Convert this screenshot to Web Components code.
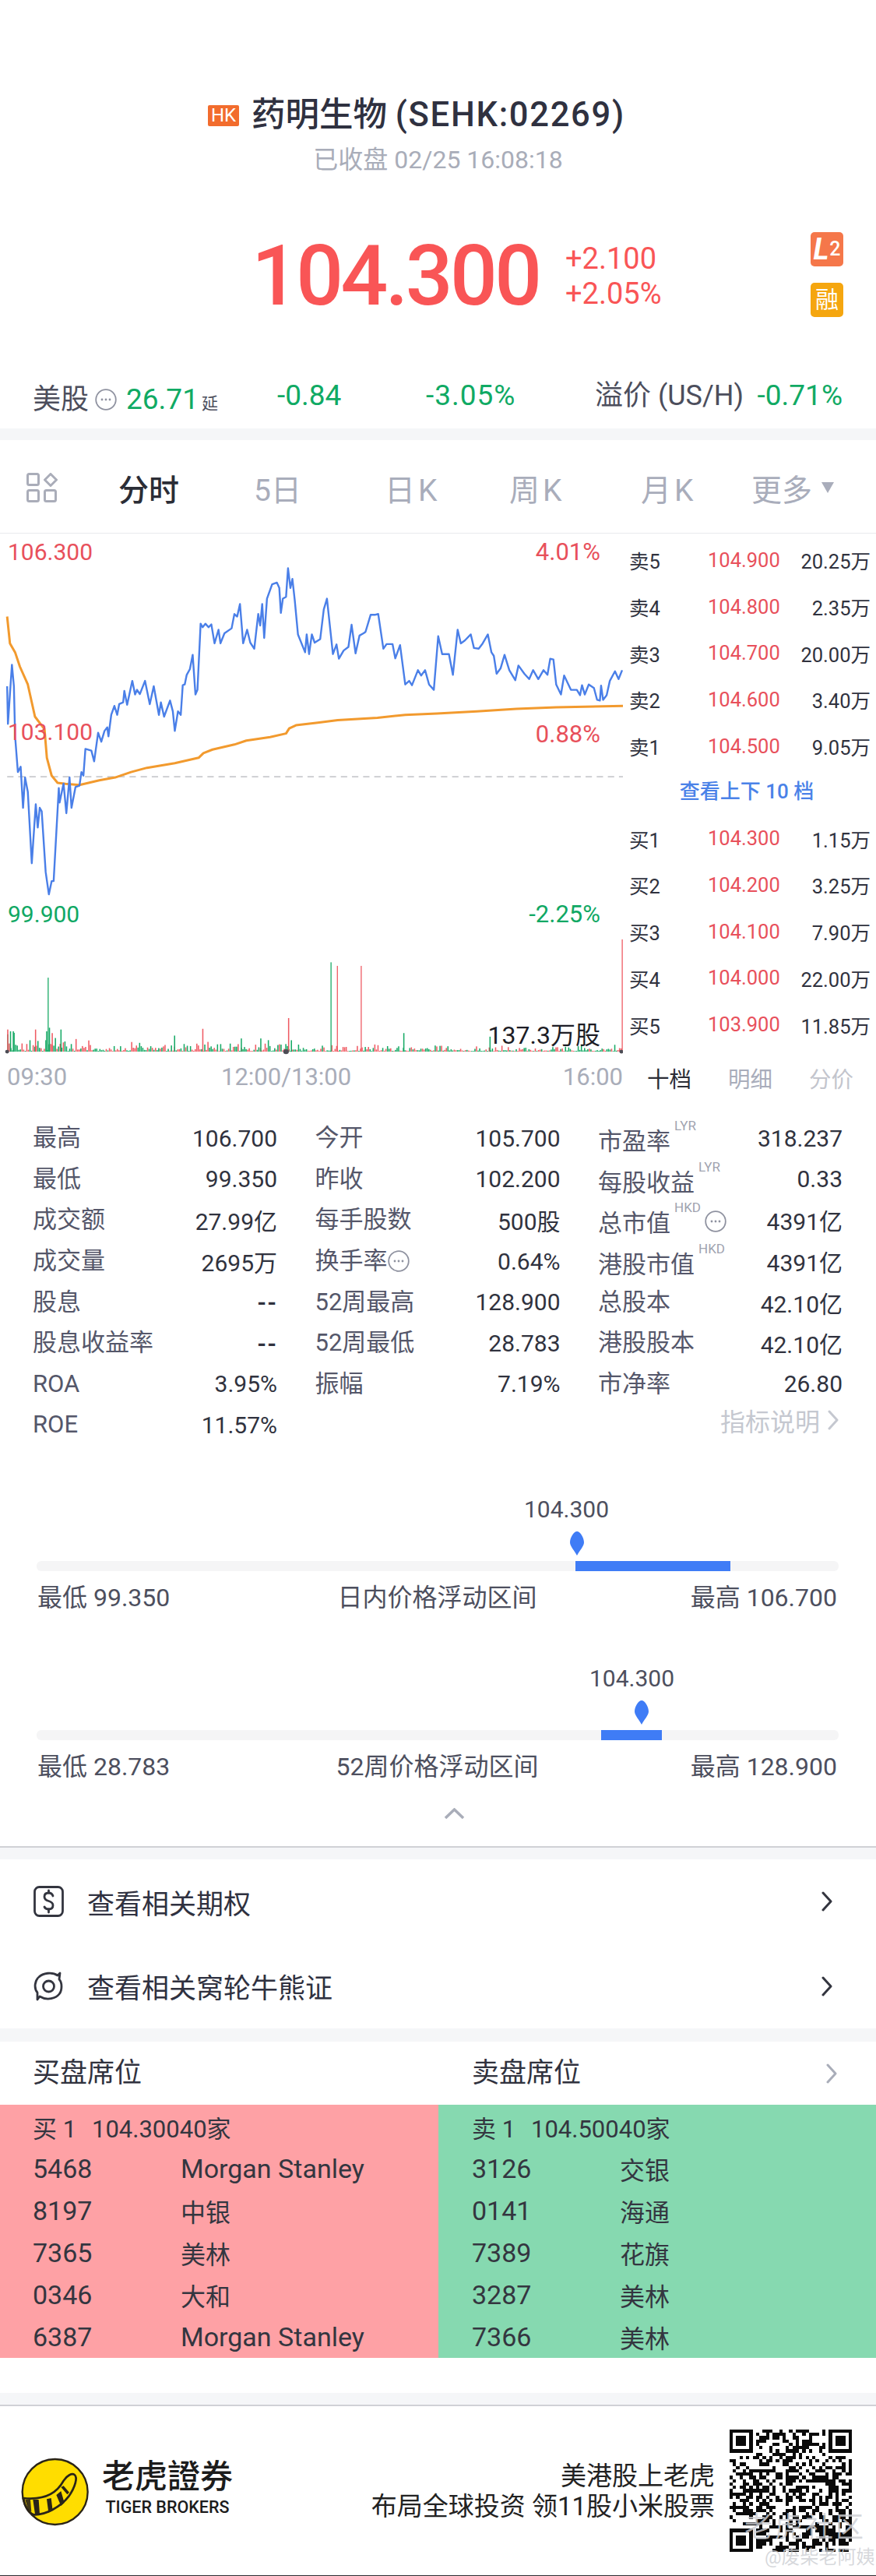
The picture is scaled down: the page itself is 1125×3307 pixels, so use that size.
<!DOCTYPE html>
<html lang="zh">
<head>
<meta charset="utf-8">
<title>药明生物</title>
<style>
  html, body { margin: 0; padding: 0; background: #fff; }
  body { width: 1125px; height: 3307px; overflow: hidden; color: #30323e;
    font-family: Roboto, "Noto Sans CJK SC", sans-serif; }
</style>
</head>
<body>
<quote-header></quote-header>
<us-quote></us-quote>
<section-gap style="--h:15px"></section-gap>
<period-tabs></period-tabs>
<div style="display:grid;grid-template-columns:800px 325px;height:714px">
  <intraday-chart></intraday-chart>
  <order-book></order-book>
</div>
<stat-grid>
  <stat-cell>最高<span slot="value">106.700</span></stat-cell>
  <stat-cell>今开<span slot="value">105.700</span></stat-cell>
  <stat-cell sup="LYR">市盈率<span slot="value">318.237</span></stat-cell>
  <stat-cell>最低<span slot="value">99.350</span></stat-cell>
  <stat-cell>昨收<span slot="value">102.200</span></stat-cell>
  <stat-cell sup="LYR">每股收益<span slot="value">0.33</span></stat-cell>
  <stat-cell>成交额<span slot="value">27.99亿</span></stat-cell>
  <stat-cell>每手股数<span slot="value">500股</span></stat-cell>
  <stat-cell sup="HKD" info>总市值<span slot="value">4391亿</span></stat-cell>
  <stat-cell>成交量<span slot="value">2695万</span></stat-cell>
  <stat-cell info>换手率<span slot="value">0.64%</span></stat-cell>
  <stat-cell sup="HKD">港股市值<span slot="value">4391亿</span></stat-cell>
  <stat-cell>股息<span slot="value" style="font-weight:700;letter-spacing:1px">--</span></stat-cell>
  <stat-cell>52周最高<span slot="value">128.900</span></stat-cell>
  <stat-cell>总股本<span slot="value">42.10亿</span></stat-cell>
  <stat-cell>股息收益率<span slot="value" style="font-weight:700;letter-spacing:1px">--</span></stat-cell>
  <stat-cell>52周最低<span slot="value">28.783</span></stat-cell>
  <stat-cell>港股股本<span slot="value">42.10亿</span></stat-cell>
  <stat-cell>ROA<span slot="value">3.95%</span></stat-cell>
  <stat-cell>振幅<span slot="value">7.19%</span></stat-cell>
  <stat-cell>市净率<span slot="value">26.80</span></stat-cell>
  <stat-cell>ROE<span slot="value">11.57%</span></stat-cell>
  <span></span>
  <metric-note>指标说明</metric-note>
</stat-grid>
<div style="height:61px"></div>
<price-range style="--price:673px;--pin:732px;--fl:692px;--fw:199px">
  <span slot="value">104.300</span>
  <span slot="lo">最低 99.350</span>
  <span slot="title">日内价格浮动区间</span>
  <span slot="hi">最高 106.700</span>
</price-range>
<div style="height:63px"></div>
<price-range style="--price:757px;--pin:815px;--fl:725px;--fw:78px">
  <span slot="value">104.300</span>
  <span slot="lo">最低 28.783</span>
  <span slot="title">52周价格浮动区间</span>
  <span slot="hi">最高 128.900</span>
</price-range>
<collapse-arrow></collapse-arrow>
<section-gap style="--h:15px;--line:#d0d1d6;--top:2px"></section-gap>
<link-row icon="dollar">查看相关期权</link-row>
<link-row icon="swirl">查看相关窝轮牛熊证</link-row>
<section-gap style="--h:17px"></section-gap>
<seat-table>
  <seat-panel slot="buy" tone="buy" heading="买盘席位">
    <seat-row head>买 1<span slot="name">104.30040家</span></seat-row>
    <seat-row>5468<span slot="name">Morgan Stanley</span></seat-row>
    <seat-row>8197<span slot="name" class="cjk">中银</span></seat-row>
    <seat-row>7365<span slot="name" class="cjk">美林</span></seat-row>
    <seat-row>0346<span slot="name" class="cjk">大和</span></seat-row>
    <seat-row>6387<span slot="name">Morgan Stanley</span></seat-row>
  </seat-panel>
  <seat-panel slot="sell" tone="sell" heading="卖盘席位">
    <seat-row head>卖 1<span slot="name">104.50040家</span></seat-row>
    <seat-row>3126<span slot="name" class="cjk">交银</span></seat-row>
    <seat-row>0141<span slot="name" class="cjk">海通</span></seat-row>
    <seat-row>7389<span slot="name" class="cjk">花旗</span></seat-row>
    <seat-row>3287<span slot="name" class="cjk">美林</span></seat-row>
    <seat-row>7366<span slot="name" class="cjk">美林</span></seat-row>
  </seat-panel>
</seat-table>
<div style="height:45px"></div>
<section-gap style="--h:15px;--line:#d0d1d6;--bottom:2px"></section-gap>
<brand-footer></brand-footer>

<script>
// chevron shared by several rows
const chevron = (color, w, h) => `<svg width="${w}" height="${h}" viewBox="0 0 16 26" fill="none" stroke="${color}" stroke-width="3" stroke-linecap="round" stroke-linejoin="round"><path d="M3 2 L13 13 L3 24"/></svg>`;

class InfoDot extends HTMLElement {
  connectedCallback() {
    this.attachShadow({ mode: 'open' }).innerHTML = `
      <style>:host { display: inline-flex; }</style>
      <svg width="28" height="28" viewBox="0 0 28 28">
        <circle cx="14" cy="14" r="12.8" fill="none" stroke="#8f92a0" stroke-width="1.8"/>
        <circle cx="9" cy="14" r="1.4" fill="#8f92a0"/><circle cx="14" cy="14" r="1.4" fill="#8f92a0"/><circle cx="19" cy="14" r="1.4" fill="#8f92a0"/>
      </svg>`;
  }
}

class SectionGap extends HTMLElement {
  connectedCallback() {
    this.attachShadow({ mode: 'open' }).innerHTML = `
      <style>
        :host { display: block; background: #f5f6f8; height: var(--h);
          border-top: var(--top, 0) solid var(--line, transparent);
          border-bottom: var(--bottom, 0) solid var(--line, transparent); }
      </style>`;
  }
}

class QuoteHeader extends HTMLElement {
  connectedCallback() {
    this.attachShadow({ mode: 'open' }).innerHTML = `
      <style>
        :host { display: block; height: 407px; box-sizing: border-box; padding-top: 123px; }
        .title { height: 50px; padding-left: 267px; display: flex; align-items: center;
          font-size: 43.500px; font-weight: 500; color: #2f3140; line-height: 50px; white-space: pre; }
        .title b { font-weight: 500; letter-spacing: 1.700px; }
        .hk { width: 40px; height: 27px; margin-right: 16px; background: #f26c2d; color: #fff; border-radius: 2px;
          font-size: 24px; font-weight: 400; line-height: 27px; text-align: center; }
        .sub { margin-top: 12px; height: 40px; line-height: 40px; text-align: center; font-size: 32px; color: #a9adb9; }
        .row { margin-top: 73px; height: 109px; padding-left: 323px; display: flex; }
        .price { width: 403px; margin-top: 5px; height: 104px; font-size: 107px; font-weight: 500; letter-spacing: -3.600px; line-height: 104px; color: #f95556; }
        .change { width: 315px; padding-top: 12px; font-size: 38px; line-height: 45px; color: #f95556; box-sizing: border-box; }
        .marks { width: 42px; display: flex; flex-direction: column; gap: 21px; }
        .mark { height: 44px; border-radius: 5px; color: #fff; display: flex; align-items: center; justify-content: center; line-height: 44px; }
        .l2 { background: #f5774a; font-size: 25px; font-weight: 500; }
        .l2 i { font-size: 38px; font-weight: 700; margin-right: 1px; }
        .rong { background: #f5a60f; font-size: 30px; }
      </style>
      <div class="title"><span class="hk">HK</span>药明生物 <b>(SEHK:02269)</b></div>
      <div class="sub">已收盘 02/25 16:08:18</div>
      <div class="row">
        <div class="price">104.300</div>
        <div class="change"><div>+2.100</div><div>+2.05%</div></div>
        <div class="marks">
          <div class="mark l2"><i>L</i>2</div>
          <div class="mark rong">融</div>
        </div>
      </div>`;
  }
}

class UsQuote extends HTMLElement {
  connectedCallback() {
    this.attachShadow({ mode: 'open' }).innerHTML = `
      <style>
        :host { display: block; height: 143px; box-sizing: border-box; padding: 81px 43px 0 42px; }
        .row { height: 40px; line-height: 40px; display: grid; grid-template-columns: 314px 191px 217px 1fr; font-size: 37px; color: #10aa64; }
        .name { color: #4c4e5c; font-size: 36px; }
        .first { display: flex; align-items: center; }
        info-dot { margin: 0 12px 0 8px; }
        .yan { font-size: 21px; color: #4c4e5c; margin: 10px 0 0 4px; }
        .last { display: flex; justify-content: space-between; }
      </style>
      <div class="row">
        <div class="first"><span class="name">美股</span><info-dot></info-dot>26.71<span class="yan">延</span></div>
        <div>-0.84</div>
        <div style="letter-spacing:1px">-3.05%</div>
        <div class="last"><span class="name">溢价 (US/H)</span><span>-0.71%</span></div>
      </div>`;
  }
}

class PeriodTabs extends HTMLElement {
  connectedCallback() {
    this.attachShadow({ mode: 'open' }).innerHTML = `
      <style>
        :host { display: grid; height: 120px; box-sizing: border-box; padding: 2px 0 0 34px; border-bottom: 1px solid #e9eaed;
          grid-template-columns: 118px 174px 168px 160px 169px 142px 1fr; align-items: center; font-size: 39px; color: #a9adbb; }
        .on { color: #2b2d36; font-weight: 500; }
        svg { display: block; }
        .more { display: flex; align-items: center; gap: 12px; }
        i { font-style: normal; margin-left: 4px; }
      </style>
      <svg width="40" height="38" viewBox="0 0 40 38" fill="none" stroke="#aaadb9" stroke-width="3">
        <rect x="1.5" y="1.5" width="14" height="14" rx="2"/>
        <path d="M31 1.5 L38.5 9 L31 16.5 L23.500 9 Z" stroke-linejoin="round"/>
        <rect x="1.5" y="22.5" width="14" height="14" rx="2"/>
        <rect x="23.5" y="22.5" width="14" height="14" rx="2"/>
      </svg>
      <span class="on">分时</span><span>5日</span><span>日<i>K</i></span><span>周<i>K</i></span><span>月<i>K</i></span>
      <span class="more">更多<svg width="16" height="14" viewBox="0 0 16 14"><path d="M0 0H16L8 14Z" fill="#a9adbb"/></svg></span>`;
  }
}

class IntradayChart extends HTMLElement {
  connectedCallback() {
    // coordinates traced on a 1568-wide by 1568-high grid over an 800x720 area
    const blue = '18,440 20,545 30,380 35,440 38,580 45,680 52,665 58,780 63,695 70,735 80,935 90,770 95,835 100,780 105,790 115,960 123,1022 130,985 135,985 148,725 150,765 160,712 167,795 175,695 180,780 190,722 200,718 205,680 210,690 215,615 230,620 237,650 247,570 255,595 263,565 270,555 273,580 280,520 288,495 295,520 300,490 310,485 313,453 320,492 333,425 340,463 345,450 352,462 365,425 377,490 387,440 400,520 405,485 413,525 428,480 435,510 440,565 448,510 455,520 460,437 465,435 470,408 478,392 485,352 492,463 497,450 505,265 510,275 517,265 525,275 532,267 540,320 550,282 555,320 565,292 583,278 590,238 597,245 604,210 612,320 622,282 630,318 640,335 650,238 655,270 660,210 665,305 672,195 685,155 697,150 703,165 707,235 712,195 720,190 725,110 731,165 736,140 742,200 750,295 768,345 772,295 778,350 785,295 792,318 806,308 815,225 823,195 838,350 847,323 853,363 865,340 877,330 885,268 895,348 905,298 915,292 920,288 933,240 945,240 952,238 965,335 973,322 988,322 995,362 1007,325 1020,435 1030,425 1037,437 1052,395 1060,410 1070,395 1080,435 1092,450 1103,300 1113,350 1130,350 1140,408 1152,282 1160,320 1170,312 1185,295 1193,333 1205,335 1215,320 1228,295 1237,345 1243,355 1250,405 1260,390 1270,352 1282,395 1297,423 1305,382 1320,405 1332,420 1342,395 1355,420 1368,395 1378,408 1385,363 1393,365 1400,435 1412,463 1420,410 1437,450 1452,450 1460,465 1465,437 1472,463 1482,435 1495,445 1503,478 1510,480 1513,438 1518,478 1527,465 1535,425 1548,398 1557,420 1566,395';
    const orange = '18,245 25,320 38,345 50,385 70,435 88,525 112,560 118,640 130,690 145,710 165,713 200,716 250,703 290,695 330,680 370,668 440,655 500,640 512,627 535,617 590,603 620,592 680,582 720,572 728,558 745,549 800,542 850,535 950,528 1020,520 1100,516 1200,510 1300,503 1400,499 1568,495';
    const spikes = { 18: [1400, 'r'], 25: [1405, 'g'], 32: [1405, 'g'], 88: [1400, 'r'], 116: [1405, 'g'], 120: [1255, 'g'], 123: [1395, 'g'], 130: [1410, 'r'], 152: [1400, 'g'], 438: [1417, 'g'], 509: [1398, 'r'], 606: [1425, 'g'], 655: [1425, 'g'], 725: [1368, 'r'], 732: [1430, 'g'], 832: [1212, 'g'], 848: [1222, 'r'], 908: [1222, 'r'], 1015: [1410, 'g'], 1232: [1420, 'g'], 1565: [1148, 'r'] };
    let seed = 2269;
    const rnd = () => (seed = (seed * 1103515245 + 12345) & 0x7fffffff) / 0x7fffffff;
    let bars = '';
    const put = (x, top, c) => { bars += `<rect x="${x}" y="${top}" width="${top < 1300 ? 2.5 : 3}" height="${1462 - top}" fill="${c}"/>`; };
    for (let x = 18; x < 1566; x += 4) {
      const amp = x < 200 ? 35 : x < 700 ? 20 : 13;
      const h = 2 + rnd() * rnd() * amp * 1.6;
      put(x, 1462 - h, rnd() > 0.5 ? '#ef5a62' : '#16a965');
    }
    for (const x in spikes) put(+x, spikes[x][0], spikes[x][1] === 'r' ? '#ef5a62' : '#16a965');

    this.attachShadow({ mode: 'open' }).innerHTML = `
      <style>
        :host { display: block; position: relative; width: 800px; height: 714px; }
        svg { display: block; }
        .axis { height: 42px; box-sizing: border-box; padding: 10px 0 0 9px; display: grid; grid-template-columns: 275px 1fr auto;
          font-size: 31px; line-height: 32px; color: #a9adb9; }
        .tag { position: absolute; font-size: 30px; line-height: 36px; height: 36px; }
        .up { color: #e8505b; }
        .down { color: #10a864; }
        .left { left: 10px; }
        .right { right: 29px; font-size: 31px; }
        .vol { position: absolute; right: 29px; top: 624px; font-size: 32px; line-height: 40px; color: #1d1d26; }
      </style>
      <svg width="800" height="672" viewBox="0 13 1568 1464" preserveAspectRatio="none" fill="none">
        <line x1="18" x2="1568" y1="693" y2="693" stroke="#b4b5bb" stroke-width="3" stroke-dasharray="16 12"/>
        <g>${bars}</g>
        <circle cx="18" cy="1462" r="5" fill="#4c4c55"/><circle cx="720" cy="1462" r="7" fill="#4c4c55"/><circle cx="1564" cy="1462" r="5" fill="#4c4c55"/>
        <polyline points="${orange}" stroke="#f29a2e" stroke-width="3" vector-effect="non-scaling-stroke" stroke-linejoin="round"/>
        <polyline points="${blue}" stroke="#4a7fe8" stroke-width="2.400" vector-effect="non-scaling-stroke" stroke-linejoin="round"/>
      </svg>
      <div class="axis"><span>09:30</span><span>12:00/13:00</span><span>16:00</span></div>
      <span class="tag up left" style="top:6px">106.300</span>
      <span class="tag up right" style="top:6px">4.01%</span>
      <span class="tag up left" style="top:237px">103.100</span>
      <span class="tag up right" style="top:240px">0.88%</span>
      <span class="tag down left" style="top:471px">99.900</span>
      <span class="tag down right" style="top:471px">-2.25%</span>
      <span class="vol">137.3万股</span>`;
  }
}

class OrderBook extends HTMLElement {
  connectedCallback() {
    const sell = [['卖5', '104.900', '20.25万'], ['卖4', '104.800', '2.35万'], ['卖3', '104.700', '20.00万'], ['卖2', '104.600', '3.40万'], ['卖1', '104.500', '9.05万']];
    const buy = [['买1', '104.300', '1.15万'], ['买2', '104.200', '3.25万'], ['买3', '104.100', '7.90万'], ['买4', '104.000', '22.00万'], ['买5', '103.900', '11.85万']];
    const rows = list => list.map(r => `<div class="row"><span>${r[0]}</span><span class="p">${r[1]}</span><span class="a">${r[2]}</span></div>`).join('');
    this.attachShadow({ mode: 'open' }).innerHTML = `
      <style>
        :host { display: block; box-sizing: border-box; padding: 4px 7px 0 8px; font-size: 25.500px; color: #30323e; }
        .row { height: 59.7px; display: grid; grid-template-columns: 101px 92px 1fr; align-items: center; }
        .p { color: #e8505b; }
        .a { text-align: right; }
        .more { height: 59px; line-height: 59px; text-align: center; color: #4a82e8; margin-left: 6px; font-size: 26px; font-weight: 500; padding-right: 14px; white-space: pre; }
        .tabs { display: flex; gap: 47px; padding: 23px 0 0 23px; font-size: 28.5px; line-height: 38px; color: #a9adbb; }
        .tabs .on { color: #2b2d36; }
        .tabs .off { color: #c3c5cd; }
      </style>
      ${rows(sell)}
      <div class="more">查看上下 10 档</div>
      ${rows(buy)}
      <div class="tabs"><span class="on">十档</span><span>明细</span><span class="off">分价</span></div>`;
  }
}

class StatGrid extends HTMLElement {
  connectedCallback() {
    this.attachShadow({ mode: 'open' }).innerHTML = `
      <style>
        :host { display: grid; box-sizing: border-box; height: 457px; padding: 36px 43px 0 42px;
          grid-template-columns: 314px 315px 314px; column-gap: 48.500px; grid-auto-rows: 52.6px; }
      </style>
      <slot></slot>`;
  }
}

class StatCell extends HTMLElement {
  connectedCallback() {
    const sup = this.getAttribute('sup');
    this.attachShadow({ mode: 'open' }).innerHTML = `
      <style>
        :host { display: flex; justify-content: space-between; align-items: center; white-space: nowrap; }
        .l { display: flex; align-items: center; font-size: 31px; color: #55576a; line-height: 40px; }
        :host([sup]) .l { padding-top: 10px; }
        .sup { position: relative; top: -21px; margin-left: 5px; font-size: 17px; line-height: 20px; color: #a0a3af; }
        :host([sup]) info-dot { position: relative; top: -3px; margin-left: 5px; }
        .v { font-size: 30px; color: #30323e; }
      </style>
      <span class="l"><slot></slot>${sup ? `<span class="sup">${sup}</span>` : ''}${this.hasAttribute('info') ? '<info-dot></info-dot>' : ''}</span>
      <span class="v"><slot name="value"></slot></span>`;
  }
}

class MetricNote extends HTMLElement {
  connectedCallback() {
    this.attachShadow({ mode: 'open' }).innerHTML = `
      <style>
        :host { display: flex; justify-content: flex-end; align-items: center; gap: 9px; font-size: 32px; color: #c5c8d0; margin-top: -12px; padding-right: 4px; }
        svg { display: block; }
      </style>
      <slot></slot>${chevron('#c5c8d0', 16, 26)}`;
  }
}

class PriceRange extends HTMLElement {
  connectedCallback() {
    this.attachShadow({ mode: 'open' }).innerHTML = `
      <style>
        :host { display: block; height: 154px; font-size: 32px; color: #4d4f5e; }
        .val { height: 40px; line-height: 42px; font-size: 30px; margin-left: var(--price); }
        svg { display: block; margin: 9px 0 0 var(--pin); }
        .track { position: relative; height: 13px; margin: 7px 48px 0 47px; background: #f5f5f6; border-radius: 6px; }
        .fill { position: absolute; top: 0; bottom: 0; left: var(--fl); width: var(--fw); background: #3f7cf6; }
        .labels { height: 40px; line-height: 40px; margin-top: 14px; padding: 0 50px 0 48px; display: grid; grid-template-columns: 1fr auto 1fr; }
        .hi { text-align: right; }
      </style>
      <div class="val"><slot name="value"></slot></div>
      <svg width="18" height="31" viewBox="0 0 18 31"><path d="M9 0 C13 0 18 8 18 14 C18 19 12 25 9 31 C6 25 0 19 0 14 C0 8 5 0 9 0 Z" fill="#3f7cf6"/></svg>
      <div class="track"><div class="fill"></div></div>
      <div class="labels"><span><slot name="lo"></slot></span><span><slot name="title"></slot></span><span class="hi"><slot name="hi"></slot></span></div>`;
  }
}

class CollapseArrow extends HTMLElement {
  connectedCallback() {
    this.attachShadow({ mode: 'open' }).innerHTML = `
      <style>
        :host { display: block; height: 82px; box-sizing: border-box; padding: 33px 0 0 570px; }
        svg { display: block; }
      </style>
      <svg width="27" height="14" viewBox="0 0 27 14" fill="none" stroke="#a9adb9" stroke-width="3.500"><path d="M2 13 L13.500 2 L25 13"/></svg>`;
  }
}

class LinkRow extends HTMLElement {
  connectedCallback() {
    const icons = {
      dollar: `<svg width="39" height="40" viewBox="0 0 39 40" fill="none" stroke="#33353f" stroke-width="2.800" stroke-linecap="round">
        <rect x="1.500" y="1.500" width="36" height="37" rx="6"/>
        <path d="M25 13 C24 10 22 9 19.500 9 C16 9 14 11 14 14 C14 17 16 18.500 19.500 19.500 C23 20.500 25 22 25 25 C25 28 23 30 19.500 30 C17 30 15 29 14 27"/>
        <path d="M19.500 6 V9 M19.500 30 V34"/></svg>`,
      swirl: `<svg width="39" height="40" viewBox="0 0 39 40" fill="none" stroke="#33353f" stroke-width="2.800" stroke-linejoin="round">
        <circle cx="19.500" cy="20" r="7"/>
        <path d="M34 3 L33 11 C37 15 37 25 33 30 C29 35 18 39 8 33 L5 37 L5 28 C0 22 2 12 7 8 C12 3 24 1 31 6 Z"/></svg>`
    };
    this.attachShadow({ mode: 'open' }).innerHTML = `
      <style>
        :host { display: flex; align-items: center; height: 108.500px; box-sizing: border-box; padding: 0 55px 0 43px; font-size: 35px; color: #2f3140; }
        .t { flex: 1; margin-left: 30px; }
        svg { display: block; }
      </style>
      ${icons[this.getAttribute('icon')]}
      <span class="t"><slot></slot></span>
      ${chevron('#33353f', 16, 26)}`;
  }
}

class SeatTable extends HTMLElement {
  connectedCallback() {
    this.attachShadow({ mode: 'open' }).innerHTML = `
      <style>
        :host { display: grid; grid-template-columns: 563px 562px; position: relative; }
        svg { position: absolute; left: 1060px; top: 28px; }
      </style>
      <slot name="buy"></slot><slot name="sell"></slot>
      ${chevron('#a9adb9', 16, 26)}`;
  }
}

class SeatPanel extends HTMLElement {
  connectedCallback() {
    const buy = this.getAttribute('tone') === 'buy';
    this.attachShadow({ mode: 'open' }).innerHTML = `
      <style>
        :host { display: block; }
        h3 { margin: 0; height: 81px; line-height: 81px; font-size: 35px; font-weight: 400; color: #30323e; padding-left: ${buy ? 42 : 43}px; }
        .body { height: 324px; padding-top: 1px; background: ${buy ? '#fea1a5' : '#86d9b0'}; padding-left: ${buy ? 42 : 43}px; }
      </style>
      <h3>${this.getAttribute('heading')}</h3>
      <div class="body"><slot></slot></div>`;
  }
}

class SeatRow extends HTMLElement {
  connectedCallback() {
    this.attachShadow({ mode: 'open' }).innerHTML = `
      <style>
        :host { display: grid; grid-template-columns: 190px 1fr; align-items: center; height: 54px; font-size: 34px; color: #343640; white-space: nowrap; }
        :host([head]) { grid-template-columns: 76px 1fr; font-size: 31px; }
        ::slotted(.cjk) { font-size: 32px; }
      </style>
      <span><slot></slot></span><span><slot name="name"></slot></span>`;
  }
}

class BrandFooter extends HTMLElement {
  connectedCallback() {
    // QR drawn from a seeded pattern: 37 modules, three finders
    const n = 37;
    let seed = 90210;
    const rnd = () => (seed = (seed * 1664525 + 1013904223) & 0x7fffffff) / 0x7fffffff;
    const inFinder = (x, y) => (x < 8 && y < 8) || (x >= n - 8 && y < 8) || (x < 8 && y >= n - 8);
    let d = '';
    const sq = (x, y, w, h) => { d += `M${x} ${y}h${w}v${h}h${-w}z`; };
    for (let y = 0; y < n; y++) for (let x = 0; x < n; x++) {
      if (!inFinder(x, y) && rnd() > 0.5) sq(x, y, 1, 1);
    }
    for (const [fx, fy] of [[0, 0], [n - 7, 0], [0, n - 7]]) {
      sq(fx, fy, 7, 1); sq(fx, fy + 6, 7, 1); sq(fx, fy + 1, 1, 5); sq(fx + 6, fy + 1, 1, 5); sq(fx + 2, fy + 2, 3, 3);
    }
    this.attachShadow({ mode: 'open' }).innerHTML = `
      <style>
        :host { display: flex; align-items: center; position: relative; height: 217px; border-bottom: 2px solid #2e2e33; color: #222; }
        svg { display: block; }
        .logo { margin-left: 15px; }
        .name { margin-left: -5px; width: 170px; text-align: center; }
        .cn { font-size: 42px; font-weight: 500; line-height: 50px; color: #1c1c1c; margin-top: -10px; white-space: nowrap; }
        .en { font-size: 21.500px; font-weight: 500; line-height: 24px; margin-top: 2px; color: #1c1c1c; white-space: nowrap; }
        .slogan { flex: 1; text-align: right; font-size: 33px; line-height: 39px; padding-right: 19px; }
        .qr { margin-right: 31px; }
        .mark { position: absolute; color: rgba(206, 208, 212, .82); white-space: nowrap; }
        .m1 { left: 956px; top: 136px; font-size: 36px; line-height: 40px; letter-spacing: 3px; }
        .m2 { left: 982px; top: 180px; font-size: 24px; line-height: 28px; }
      </style>
      <svg class="logo" width="120" height="110" viewBox="0 0 360 330">
        <circle cx="167" cy="168" r="126" fill="#ffdd00" stroke="#2a2418" stroke-width="7"/>
        <path d="M45 192 C100 198 165 190 200 125 C212 105 232 95 242 102 C255 112 245 150 220 185 C190 225 130 258 85 256 C65 250 50 225 45 192 Z" fill="none" stroke="#2a2418" stroke-width="8" stroke-linejoin="round"/>
        <path d="M82 198 L104 198 L108 254 L90 254 Z M135 196 L152 192 L158 240 L142 248 Z M172 180 L190 165 L203 210 L190 222 Z M190 150 L200 145 L222 170 L214 178 Z" fill="#2a2418"/>
        <path d="M52 198 L72 198 L76 245 L64 240 Z" fill="#2a2418" opacity=".9"/>
      </svg>
      <div class="name"><div class="cn">老虎證券</div><div class="en">TIGER BROKERS</div></div>
      <div class="slogan">美港股上老虎<br>布局全球投资 领11股小米股票</div>
      <svg class="qr" width="157" height="157" viewBox="0 0 ${n} ${n}" shape-rendering="crispEdges"><path d="${d}" fill="#0a0a0a"/></svg>
      <span class="mark m1">老虎社区</span>
      <span class="mark m2">@废柴老阿姨</span>`;
  }
}

customElements.define('info-dot', InfoDot);
customElements.define('section-gap', SectionGap);
customElements.define('quote-header', QuoteHeader);
customElements.define('us-quote', UsQuote);
customElements.define('period-tabs', PeriodTabs);
customElements.define('intraday-chart', IntradayChart);
customElements.define('order-book', OrderBook);
customElements.define('stat-grid', StatGrid);
customElements.define('stat-cell', StatCell);
customElements.define('metric-note', MetricNote);
customElements.define('price-range', PriceRange);
customElements.define('collapse-arrow', CollapseArrow);
customElements.define('link-row', LinkRow);
customElements.define('seat-table', SeatTable);
customElements.define('seat-panel', SeatPanel);
customElements.define('seat-row', SeatRow);
customElements.define('brand-footer', BrandFooter);
</script>
</body>
</html>
